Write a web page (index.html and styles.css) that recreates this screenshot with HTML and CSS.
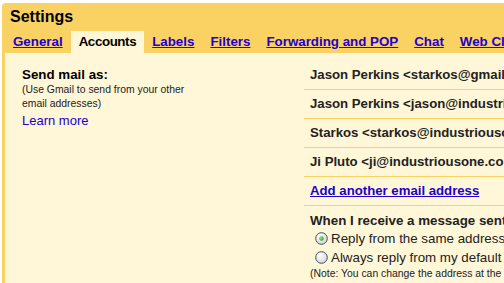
FILE: index.html
```html
<!DOCTYPE html>
<html>
<head>
<meta charset="utf-8">
<title>Settings</title>
<link rel="stylesheet" href="styles.css">
</head>
<body>
<div class="settings">
  <h1 class="title">Settings</h1>
  <ul class="tabs">
    <li class="tab"><a href="#">General</a></li>
    <li class="tab active">Accounts</li>
    <li class="tab"><a href="#">Labels</a></li>
    <li class="tab"><a href="#">Filters</a></li>
    <li class="tab"><a href="#">Forwarding and POP</a></li>
    <li class="tab"><a href="#">Chat</a></li>
    <li class="tab"><a href="#">Web Clips</a></li>
  </ul>
  <div class="panel">
    <div class="section">
      <div class="label-col">
        <div class="label">Send mail as:</div>
        <div class="hint">(Use Gmail to send from your other email addresses)</div>
        <a class="learn" href="#">Learn more</a>
      </div>
      <div class="value-col">
        <div class="addr">Jason Perkins &lt;starkos@gmail.com&gt;</div>
        <div class="addr">Jason Perkins &lt;jason@industriousone.com&gt;</div>
        <div class="addr">Starkos &lt;starkos@industriousone.com&gt;</div>
        <div class="addr">Ji Pluto &lt;ji@industriousone.com&gt;</div>
        <div class="addr"><a class="add" href="#">Add another email address</a></div>
        <div class="reply">
          <div class="reply-q">When I receive a message sent to one of my addresses:</div>
          <div class="opt"><svg class="radio" viewBox="0 0 13 13" width="13" height="13"><defs><radialGradient id="rg1" cx="0.35" cy="0.3" r="0.8"><stop offset="0" stop-color="#ffffff"/><stop offset="1" stop-color="#d6d3c8"/></radialGradient><radialGradient id="dot" cx="0.4" cy="0.4" r="0.6"><stop offset="0" stop-color="#9ef08c"/><stop offset="1" stop-color="#21a121"/></radialGradient></defs><circle cx="6.5" cy="6.5" r="5.8" fill="url(#rg1)" stroke="#39526e" stroke-width="1"/><circle cx="6.5" cy="6.5" r="2.2" fill="url(#dot)"/></svg>Reply from the same address the message was sent to</div>
          <div class="opt"><svg class="radio" viewBox="0 0 13 13" width="13" height="13"><circle cx="6.5" cy="6.5" r="5.8" fill="url(#rg1)" stroke="#39526e" stroke-width="1"/></svg>Always reply from my default address</div>
          <div class="note">(Note: You can change the address at the time of your reply.)</div>
        </div>
      </div>
    </div>
  </div>
</div>
</body>
</html>
```
FILE: styles.css
```css
html, body {
  margin: 0;
  padding: 0;
  background: #ffffff;
  overflow: hidden;
}
body {
  font-family: "Liberation Sans", Arial, sans-serif;
  color: #000;
}
.settings {
  margin: 3px 0 0 2px;
  width: 800px;
  padding-left: 3px;
  background: #fad163;
  border-top-left-radius: 4px;
}
.title {
  margin: 0;
  padding: 4px 0 0 5px;
  font-size: 16px;
  line-height: 19px;
  font-weight: bold;
}
.tabs {
  display: flex;
  list-style: none;
  margin: 5px 0 0 0;
  padding: 0;
  white-space: nowrap;
}
.tab {
  padding: 3px 8px 4px;
  font-size: 13.33px;
  line-height: 15px;
  font-weight: bold;
}
.tab a {
  color: #2200cc;
  text-decoration: underline;
}
.tab.active {
  background: #fff7d7;
  color: #000;
  letter-spacing: -0.4px;
}
.panel {
  background: #fff7d7;
  padding-top: 8px;
  min-height: 300px;
}
.section {
  display: flex;
}
.label-col {
  width: 282px;
  padding-left: 17px;
  flex: none;
}
.label {
  font-size: 13.33px;
  line-height: 16px;
  font-weight: bold;
  padding-top: 6px;
}
.hint {
  font-size: 10.4px;
  line-height: 14px;
  max-width: 180px;
  color: #222;
}
.learn {
  display: block;
  font-size: 13px;
  line-height: 16px;
  color: #2200cc;
  text-decoration: none;
  margin-top: 2px;
}
.value-col {
  flex: 1;
  min-width: 0;
}
.addr {
  padding: 6px 0 6px 6px;
  line-height: 16px;
  font-size: 13.2px;
  font-weight: bold;
  white-space: nowrap;
  border-bottom: 1px solid #fad163;
  color: #222;
}
.add {
  color: #2200cc;
  text-decoration: underline;
}
.reply {
  padding: 7px 0 0 6px;
  white-space: nowrap;
}
.reply-q {
  font-size: 13.33px;
  line-height: 16px;
  font-weight: bold;
  color: #222;
}
.opt {
  font-size: 13.33px;
  line-height: 19px;
  padding-left: 5px;
  color: #222;
}
.radio {
  vertical-align: -2px;
  margin-right: 3px;
}
.note {
  font-size: 10.4px;
  line-height: 13px;
  color: #222;
}
```
